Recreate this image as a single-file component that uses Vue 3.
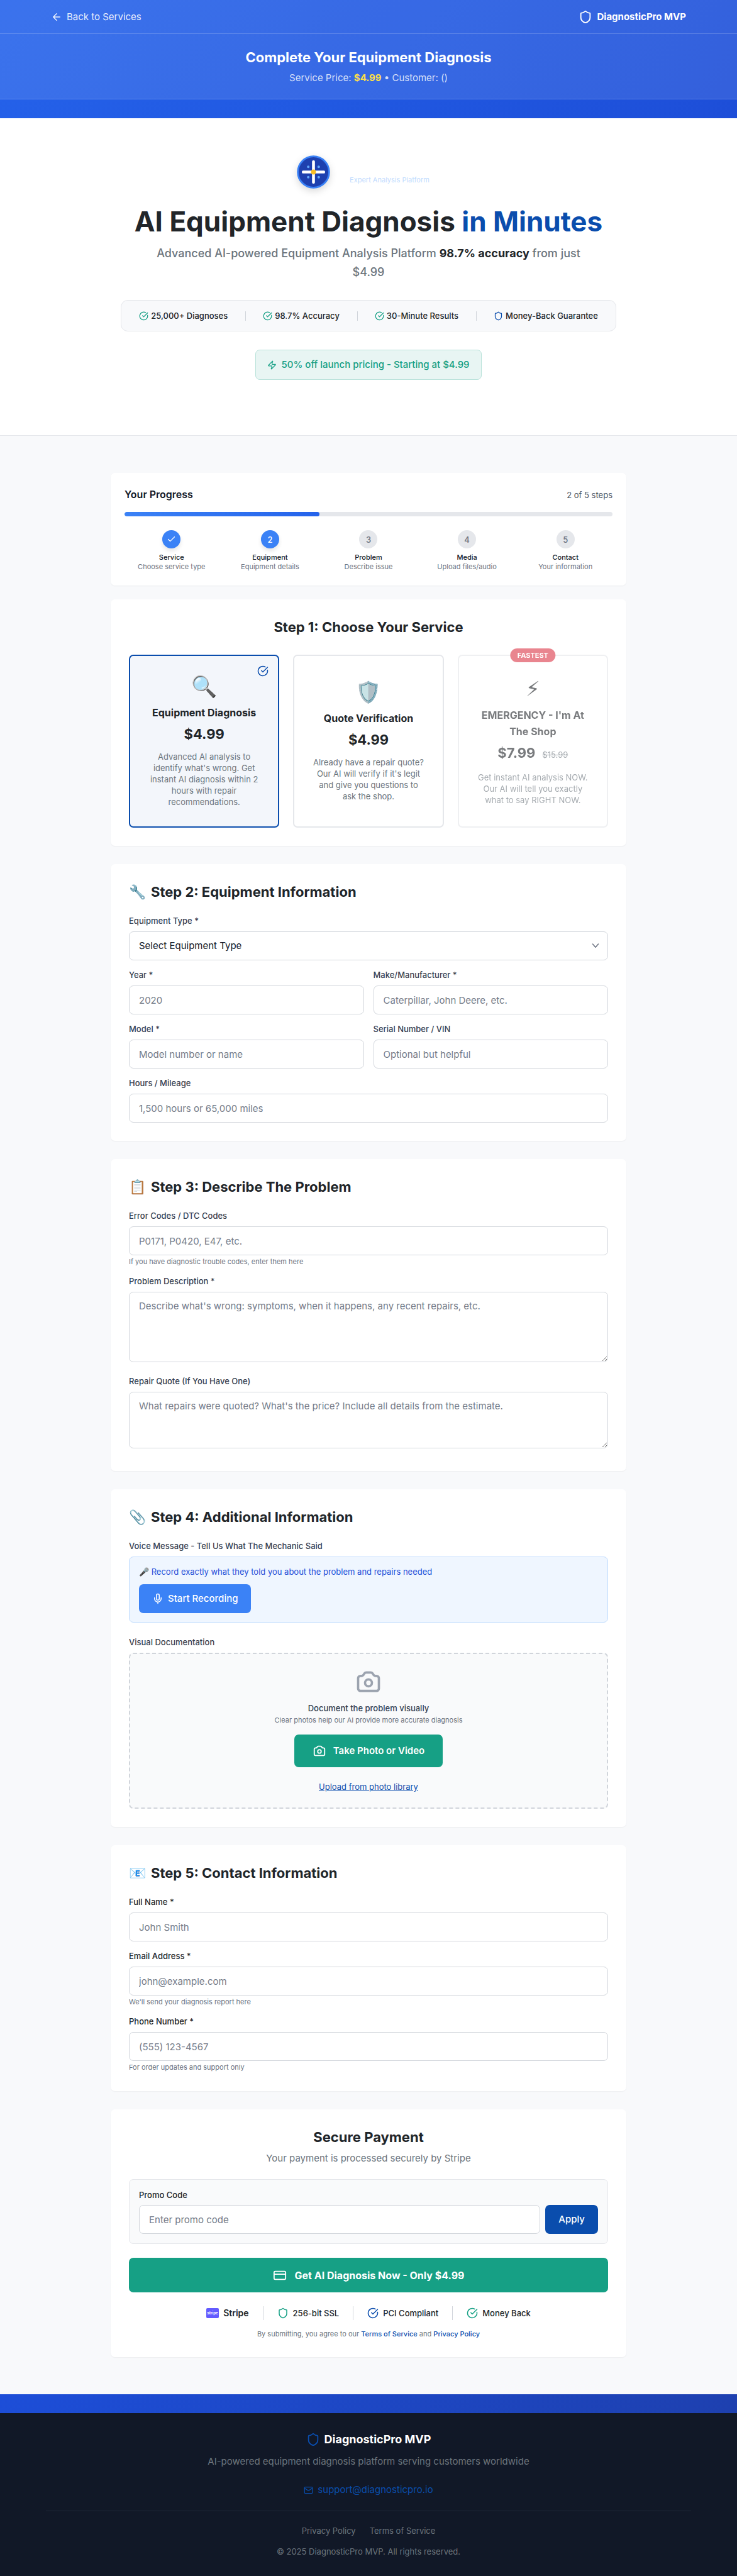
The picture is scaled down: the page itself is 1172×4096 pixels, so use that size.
<script setup>
import { ref } from 'vue'

const icons = {
  shield: ['M20 13c0 5-3.5 7.5-7.66 8.95a1 1 0 0 1-.67-.01C7.5 20.5 4 18 4 13V6a1 1 0 0 1 1-1c2 0 4.500-1.200 6.240-2.720a1.170 1.170 0 0 1 1.520 0C14.510 3.810 17 5 19 5a1 1 0 0 1 1 1z'],
  check: ['M21.801 10A10 10 0 1 1 17 3.335', 'm9 11 3 3L22 4'],
}

const trust = [
  { text: '25,000+ Diagnoses', icon: 'check' },
  { text: '98.7% Accuracy', icon: 'check' },
  { text: '30-Minute Results', icon: 'check' },
  { text: 'Money-Back Guarantee', icon: 'shield' },
]

const steps = [
  { name: 'Service', desc: 'Choose service type', done: true, active: true },
  { name: 'Equipment', desc: 'Equipment details', active: true },
  { name: 'Problem', desc: 'Describe issue' },
  { name: 'Media', desc: 'Upload files/audio' },
  { name: 'Contact', desc: 'Your information' },
]
const progress = 40

const services = [
  {
    id: 'diagnosis',
    emoji: '🔍',
    name: 'Equipment Diagnosis',
    price: '$4.99',
    desc: "Advanced AI analysis to identify what's wrong. Get instant AI diagnosis within 2 hours with repair recommendations.",
  },
  {
    id: 'quote',
    emoji: '🛡️',
    name: 'Quote Verification',
    price: '$4.99',
    desc: "Already have a repair quote? Our AI will verify if it's legit and give you questions to ask the shop.",
  },
  {
    id: 'emergency',
    emoji: '⚡\uFE0E',
    name: "EMERGENCY - I'm At The Shop",
    price: '$7.99',
    oldPrice: '$15.99',
    badge: 'FASTEST',
    dim: true,
    desc: 'Get instant AI analysis NOW. Our AI will tell you exactly what to say RIGHT NOW.',
  },
]
const selected = ref('diagnosis')

const equipment = [
  { id: 'year', label: 'Year *', hint: '2020' },
  { id: 'make', label: 'Make/Manufacturer *', hint: 'Caterpillar, John Deere, etc.' },
  { id: 'model', label: 'Model *', hint: 'Model number or name' },
  { id: 'serial', label: 'Serial Number / VIN', hint: 'Optional but helpful' },
]

const contact = [
  { id: 'name', type: 'text', label: 'Full Name *', hint: 'John Smith' },
  { id: 'email', type: 'email', label: 'Email Address *', hint: 'john@example.com', help: "We'll send your diagnosis report here" },
  { id: 'phone', type: 'tel', label: 'Phone Number *', hint: '(555) 123-4567', help: 'For order updates and support only' },
]
</script>

<template>
  <div class="page">
    <header class="top">
      <div class="bar">
        <div class="bar-inner">
          <a href="#" class="back">
            <svg class="icon i18" viewBox="0 0 24 24"><path d="m12 19-7-7 7-7M19 12H5" /></svg>
            Back to Services
          </a>
          <div class="brand">
            <svg class="icon i22" viewBox="0 0 24 24"><path :d="icons.shield[0]" /></svg>
            DiagnosticPro MVP
          </div>
        </div>
      </div>
      <div class="band">
        <h2>Complete Your Equipment Diagnosis</h2>
        <p>Service Price: <strong>$4.99</strong> • Customer: ()</p>
      </div>
    </header>

    <section class="hero">
      <div class="logo">
        <svg viewBox="0 0 64 64" class="logo-mark">
          <circle cx="32" cy="32" r="27" fill="#1e40af" stroke="#3b82f6" stroke-width="3" />
          <rect x="29.500" y="12" width="5" height="40" rx="2" fill="#fff" />
          <rect x="12" y="29.500" width="40" height="5" rx="2" fill="#fff" />
          <circle cx="32" cy="32" r="4.300" fill="#fbbf24" />
          <g fill="#60a5fa">
            <circle cx="23" cy="23" r="2.200" />
            <circle cx="41" cy="23" r="2.200" />
            <circle cx="23" cy="41" r="2.200" />
            <circle cx="41" cy="41" r="2.200" />
          </g>
        </svg>
        <span>Expert Analysis Platform</span>
      </div>
      <h1>AI Equipment Diagnosis <em>in Minutes</em></h1>
      <p class="lead">Advanced AI-powered Equipment Analysis Platform <strong>98.7% accuracy</strong> from just $4.99</p>
      <ul class="trust">
        <li v-for="t in trust" :key="t.text">
          <svg class="icon i15" :class="t.icon" viewBox="0 0 24 24"><path v-for="d in icons[t.icon]" :key="d" :d="d" /></svg>
          {{ t.text }}
        </li>
      </ul>
      <div class="promo-pill">
        <svg class="icon i15" viewBox="0 0 24 24"><path d="M4 14a1 1 0 0 1-.78-1.630l9.900-10.200a.5.5 0 0 1 .86.460l-1.920 6.020A1 1 0 0 0 13 10h7a1 1 0 0 1 .78 1.630l-9.900 10.200a.5.5 0 0 1-.86-.460l1.920-6.020A1 1 0 0 0 11 14z" /></svg>
        50% off launch pricing - Starting at $4.99
      </div>
    </section>

    <main class="main">
      <div class="column">
        <section class="card progress">
          <div class="progress-head">
            <h3>Your Progress</h3>
            <span>2 of 5 steps</span>
          </div>
          <div class="track"><div class="fill" :style="{ width: progress + '%' }"></div></div>
          <ol class="steps">
            <li v-for="(s, i) in steps" :key="s.name">
              <span class="dot" :class="{ on: s.active }">
                <svg v-if="s.done" class="icon i15" viewBox="0 0 24 24"><path d="M20 6 9 17l-5-5" /></svg>
                <template v-else>{{ i + 1 }}</template>
              </span>
              <b>{{ s.name }}</b>
              <small>{{ s.desc }}</small>
            </li>
          </ol>
        </section>

        <section class="card first">
          <h2 class="center">Step 1: Choose Your Service</h2>
          <div class="services">
            <button
              v-for="s in services"
              :key="s.id"
              type="button"
              class="service"
              :class="{ selected: s.id === selected, dim: s.dim }"
              @click="selected = s.id"
            >
              <span v-if="s.badge" class="badge">{{ s.badge }}</span>
              <svg v-if="s.id === selected" class="icon i18 tick" viewBox="0 0 24 24"><path v-for="d in icons.check" :key="d" :d="d" /></svg>
              <span class="emoji">{{ s.emoji }}</span>
              <span class="name">{{ s.name }}</span>
              <span class="price">{{ s.price }}<s v-if="s.oldPrice">{{ s.oldPrice }}</s></span>
              <span class="desc">{{ s.desc }}</span>
            </button>
          </div>
        </section>

        <section class="card">
          <h2 class="step"><span>🔧</span>Step 2: Equipment Information</h2>
          <div class="fields two">
            <div class="field wide">
              <label for="type">Equipment Type *</label>
              <div class="select">
                <select id="type"><option>Select Equipment Type</option></select>
                <svg class="icon i18" viewBox="0 0 24 24"><path d="m6 8 6 7 6-7" /></svg>
              </div>
            </div>
            <div v-for="f in equipment" :key="f.id" class="field">
              <label :for="f.id">{{ f.label }}</label>
              <input :id="f.id" type="text" :placeholder="f.hint" />
            </div>
            <div class="field wide">
              <label for="hours">Hours / Mileage</label>
              <input id="hours" type="text" placeholder="1,500 hours or 65,000 miles" />
            </div>
          </div>
        </section>

        <section class="card">
          <h2 class="step"><span>📋</span>Step 3: Describe The Problem</h2>
          <div class="fields">
            <div class="field">
              <label for="codes">Error Codes / DTC Codes</label>
              <input id="codes" type="text" placeholder="P0171, P0420, E47, etc." />
              <small>If you have diagnostic trouble codes, enter them here</small>
            </div>
            <div class="field area">
              <label for="problem">Problem Description *</label>
              <textarea id="problem" class="tall" placeholder="Describe what's wrong: symptoms, when it happens, any recent repairs, etc."></textarea>
            </div>
            <div class="field area">
              <label for="quote">Repair Quote (If You Have One)</label>
              <textarea id="quote" placeholder="What repairs were quoted? What's the price? Include all details from the estimate."></textarea>
            </div>
          </div>
        </section>

        <section class="card">
          <h2 class="step"><span>📎</span>Step 4: Additional Information</h2>
          <h4>Voice Message - Tell Us What The Mechanic Said</h4>
          <div class="voice">
            <p>🎤 Record exactly what they told you about the problem and repairs needed</p>
            <button type="button" class="record">
              <svg class="icon i18" viewBox="0 0 24 24"><path d="M12 2a3 3 0 0 0-3 3v7a3 3 0 0 0 6 0V5a3 3 0 0 0-3-3Z" /><path d="M19 10v2a7 7 0 0 1-14 0v-2M12 19v3" /></svg>
              Start Recording
            </button>
          </div>
          <h4 class="later">Visual Documentation</h4>
          <div class="drop">
            <svg class="icon i44" viewBox="0 0 24 24"><path d="M3 9a2 2 0 012-2h.93a2 2 0 001.664-.89l.812-1.220A2 2 0 0110.070 4h3.860a2 2 0 011.664.89l.812 1.220A2 2 0 0018.070 7H19a2 2 0 012 2v9a2 2 0 01-2 2H5a2 2 0 01-2-2V9z" /><circle cx="12" cy="13" r="3" /></svg>
            <p>Document the problem visually</p>
            <small>Clear photos help our AI provide more accurate diagnosis</small>
            <button type="button" class="photo">
              <svg class="icon i22" viewBox="0 0 24 24"><path d="M3 9a2 2 0 012-2h.93a2 2 0 001.664-.89l.812-1.220A2 2 0 0110.070 4h3.860a2 2 0 011.664.89l.812 1.220A2 2 0 0018.070 7H19a2 2 0 012 2v9a2 2 0 01-2 2H5a2 2 0 01-2-2V9z" /><circle cx="12" cy="13" r="3" /></svg>
              Take Photo or Video
            </button>
            <a href="#">Upload from photo library</a>
          </div>
        </section>

        <section class="card contact">
          <h2 class="step"><span>📧</span>Step 5: Contact Information</h2>
          <div class="fields">
            <div v-for="f in contact" :key="f.id" class="field">
              <label :for="f.id">{{ f.label }}</label>
              <input :id="f.id" :type="f.type" :placeholder="f.hint" />
              <small v-if="f.help">{{ f.help }}</small>
            </div>
          </div>
        </section>

        <section class="card pay">
          <h2 class="center">Secure Payment</h2>
          <p class="sub">Your payment is processed securely by Stripe</p>
          <div class="promo">
            <label for="promo">Promo Code</label>
            <div class="promo-row">
              <input id="promo" type="text" placeholder="Enter promo code" />
              <button type="button">Apply</button>
            </div>
          </div>
          <button type="button" class="cta">
            <svg class="icon i22" viewBox="0 0 24 24"><rect x="2" y="5" width="20" height="14" rx="2" /><path d="M2 10h20" /></svg>
            Get AI Diagnosis Now - Only $4.99
          </button>
          <ul class="secure">
            <li class="stripe">
              <svg class="stripe-mark" viewBox="0 0 20 16"><rect width="20" height="16" rx="2" fill="#635bff" /><text x="10" y="10" text-anchor="middle" fill="#fff" font-size="6" font-weight="700">stripe</text></svg>
              Stripe
            </li>
            <li><svg class="icon i18 green" viewBox="0 0 24 24"><path :d="icons.shield[0]" /></svg>256-bit SSL</li>
            <li><svg class="icon i18 blue" viewBox="0 0 24 24"><path v-for="d in icons.check" :key="d" :d="d" /></svg>PCI Compliant</li>
            <li><svg class="icon i18 green" viewBox="0 0 24 24"><path v-for="d in icons.check" :key="d" :d="d" /></svg>Money Back</li>
          </ul>
          <p class="terms">By submitting, you agree to our <a href="#">Terms of Service</a> and <a href="#">Privacy Policy</a></p>
        </section>
      </div>
    </main>

    <div class="strip"></div>
    <footer class="footer">
      <div class="foot-brand">
        <svg class="icon i22" viewBox="0 0 24 24"><path :d="icons.shield[0]" /></svg>
        DiagnosticPro MVP
      </div>
      <p class="tagline">AI-powered equipment diagnosis platform serving customers worldwide</p>
      <a href="#" class="mail">
        <svg class="icon i15" viewBox="0 0 24 24"><rect x="2" y="4" width="20" height="16" rx="2" /><path d="m22 7-8.970 5.700a1.940 1.940 0 0 1-2.060 0L2 7" /></svg>
        support@diagnosticpro.io
      </a>
      <div class="legal">
        <nav><a href="#">Privacy Policy</a><a href="#">Terms of Service</a></nav>
        <p>© 2025 DiagnosticPro MVP. All rights reserved.</p>
      </div>
    </footer>
  </div>
</template>

<style>
body {
  margin: 0;
}
</style>

<style scoped>
.page {
  --blue: #0a4dad;
  --green: #16a085;
  --ink: #212529;
  --muted: #6c757d;
  --line: #e5e7eb;
  font-family: Inter, "Liberation Sans", sans-serif;
  font-size: 15px;
  line-height: 22px;
  color: var(--ink);
  background: #fff;
}
.page * {
  box-sizing: border-box;
}
h1, h2, h3, h4, p, ul, ol {
  margin: 0;
  padding: 0;
}
ul, ol {
  list-style: none;
}
a {
  color: inherit;
  text-decoration: none;
}
button, input, select, textarea {
  font: inherit;
  color: inherit;
  margin: 0;
}
button {
  border: 0;
  cursor: pointer;
}
small {
  font-size: 11px;
  line-height: 15px;
}
.icon {
  flex: none;
  fill: none;
  stroke: currentColor;
  stroke-width: 2;
  stroke-linecap: round;
  stroke-linejoin: round;
}
.i15 { width: 15px; height: 15px; }
.i18 { width: 18px; height: 18px; }
.i22 { width: 22px; height: 22px; }
.i44 { width: 44px; height: 44px; }
.green { color: var(--green); }
.blue { color: var(--blue); }

/* Header */
.top {
  padding-bottom: 30px;
  color: #fff;
  background: linear-gradient(135deg, #2563eb, #1d4ed8);
}
.bar, .band {
  background: rgba(255, 255, 255, 0.1);
  border-bottom: 1px solid rgba(255, 255, 255, 0.2);
}
.bar-inner {
  display: flex;
  align-items: center;
  justify-content: space-between;
  max-width: 1040px;
  height: 53px;
  margin: 0 auto;
  padding: 0 15px;
}
.back, .brand {
  display: flex;
  align-items: center;
  gap: 7px;
}
.back {
  color: rgba(255, 255, 255, 0.9);
}
.brand {
  font-weight: 700;
}
.band {
  padding: 22px 0;
  text-align: center;
}
.band h2 {
  font-size: 22px;
  line-height: 30px;
  font-weight: 700;
}
.band p {
  margin-top: 7px;
  color: rgba(255, 255, 255, 0.8);
}
.band strong {
  color: #fde047;
}

/* Hero */
.hero {
  display: flex;
  flex-direction: column;
  align-items: center;
  padding: 56px 22px 88px;
  text-align: center;
  border-bottom: 1px solid var(--line);
}
.logo {
  display: flex;
  align-items: flex-end;
  gap: 28px;
  padding-right: 20px;
}
.logo-mark {
  width: 59px;
  height: 59px;
  filter: drop-shadow(0 4px 6px rgba(0, 0, 0, 0.15));
}
.logo span {
  padding-bottom: 9px;
  font-size: 11px;
  line-height: 15px;
  color: #bfdbfe;
}
h1 {
  margin-top: 22px;
  font-size: 44px;
  line-height: 55px;
  font-weight: 700;
}
h1 em {
  font-style: normal;
  color: var(--blue);
}
.lead {
  max-width: 703px;
  margin-top: 8px;
  font-size: 18px;
  line-height: 30px;
  font-weight: 500;
  color: var(--muted);
}
.lead strong {
  color: var(--ink);
}
.trust {
  display: flex;
  align-items: center;
  margin-top: 29px;
  padding: 15px 0;
  font-size: 13px;
  line-height: 18px;
  font-weight: 500;
  background: #f8f9fb;
  border: 1px solid var(--line);
  border-radius: 11px;
}
.trust li {
  display: flex;
  align-items: center;
  gap: 4px;
  padding: 0 28px;
}
.trust li + li {
  background: linear-gradient(#d1d5db, #d1d5db) left center / 1px 15px no-repeat;
}
.trust .check { color: var(--green); }
.trust .shield { color: var(--blue); }
.promo-pill {
  display: flex;
  align-items: center;
  gap: 7px;
  margin-top: 29px;
  padding: 12px 18px;
  font-weight: 500;
  color: var(--green);
  background: #e8f5f3;
  border: 1px solid #b9e2da;
  border-radius: 7px;
}

/* Cards */
.main {
  padding: 59px 22px;
  background: #f8f9fb;
}
.column {
  display: flex;
  flex-direction: column;
  gap: 29px;
  max-width: 820px;
  margin: 0 auto;
}
.card {
  padding: 29px;
  background: #fff;
  border-radius: 7px;
  box-shadow: 0 1px 2px rgba(0, 0, 0, 0.05);
}
.card h2 {
  margin-bottom: 22px;
  font-size: 22px;
  line-height: 30px;
  font-weight: 700;
}
.card h2.center {
  text-align: center;
}
.step {
  display: flex;
  gap: 8px;
}
.step span {
  width: 27px;
}
.progress {
  padding: 22px;
}
.progress-head {
  display: flex;
  align-items: center;
  justify-content: space-between;
  font-size: 13px;
  color: #4b5563;
}
.progress-head h3 {
  font-size: 16px;
  line-height: 25px;
  font-weight: 600;
  color: #111827;
}
.track {
  height: 7px;
  margin: 15px 0 22px;
  overflow: hidden;
  background: var(--line);
  border-radius: 4px;
}
.fill {
  height: 100%;
  background: linear-gradient(90deg, #3b82f6, #2563eb);
  border-radius: 4px;
}
.steps {
  display: grid;
  grid-template-columns: repeat(5, 1fr);
  gap: 7px;
}
.steps li {
  display: flex;
  flex-direction: column;
  align-items: center;
}
.dot {
  display: flex;
  align-items: center;
  justify-content: center;
  width: 29px;
  height: 29px;
  margin-bottom: 7px;
  font-size: 13px;
  font-weight: 500;
  color: #6b7280;
  background: var(--line);
  border-radius: 50%;
}
.dot.on {
  color: #fff;
  background: #3b82f6;
  box-shadow: 0 4px 6px rgba(0, 0, 0, 0.1);
}
.steps b {
  font-size: 11px;
  line-height: 15px;
  font-weight: 500;
  color: #111827;
}
.steps small {
  color: #6b7280;
}

/* Service choice */
.first {
  margin-top: -7px;
}
.card.first h2 {
  margin-bottom: 29px;
}
.services {
  display: grid;
  grid-template-columns: repeat(3, 1fr);
  gap: 22px;
}
.service {
  position: relative;
  display: flex;
  flex-direction: column;
  align-items: center;
  justify-content: center;
  padding: 30px 29px;
  background: #fff;
  border: 2px solid var(--line);
  border-radius: 7px;
}
.service.selected {
  background: #f3f6fb;
  border-color: var(--blue);
}
.service.dim {
  opacity: 0.6;
}
.badge {
  position: absolute;
  top: -12px;
  left: 50%;
  padding: 0 11px;
  font-size: 11px;
  line-height: 22px;
  font-weight: 700;
  color: #fff;
  background: #dc3545;
  border-radius: 11px;
  transform: translateX(-50%);
}
.tick {
  position: absolute;
  top: 15px;
  right: 15px;
  color: var(--blue);
}
.emoji {
  font-size: 33px;
  line-height: 37px;
}
.dim .emoji {
  font-family: "DejaVu Sans", sans-serif;
}
.name {
  margin-top: 10px;
  font-size: 16px;
  line-height: 26px;
  font-weight: 700;
}
.price {
  margin-top: 7px;
  font-size: 22px;
  line-height: 29px;
  font-weight: 700;
}
.price s {
  margin-left: 11px;
  font-size: 13px;
  font-weight: 400;
  color: var(--muted);
}
.desc {
  margin-top: 12px;
  font-size: 13px;
  line-height: 18px;
  color: var(--muted);
}

/* Forms */
.fields {
  display: grid;
  gap: 14px 15px;
}
.fields.two {
  grid-template-columns: 1fr 1fr;
}
.wide {
  grid-column: 1 / -1;
}
.field {
  display: flex;
  flex-direction: column;
}
.area {
  padding-bottom: 7px;
}
label, h4 {
  display: block;
  margin-bottom: 8px;
  font-size: 13px;
  line-height: 18px;
  font-weight: 500;
  color: #374151;
}
.contact label, .promo label {
  color: var(--ink);
}
input, select, textarea {
  width: 100%;
  height: 46px;
  padding: 0 15px;
  color: #111827;
  background: #fff;
  border: 1px solid #d1d5db;
  border-radius: 7px;
}
select {
  appearance: none;
}
textarea {
  height: 90px;
  padding: 11px 15px;
  resize: vertical;
}
textarea.tall {
  height: 112px;
}
input::placeholder, textarea::placeholder {
  color: #757c89;
  opacity: 1;
}
.select {
  position: relative;
}
.select .icon {
  position: absolute;
  top: 14px;
  right: 11px;
  color: #6b7280;
}
.field small {
  margin-top: 3px;
  color: #6b7280;
}
.contact {
  padding-bottom: 30px;
}

/* Media */
.voice {
  padding: 14px 15px;
  background: #eff6ff;
  border: 1px solid #bfdbfe;
  border-radius: 7px;
}
.voice p {
  margin-bottom: 11px;
  font-size: 13px;
  line-height: 18px;
  color: #1d4ed8;
}
.record {
  display: flex;
  align-items: center;
  gap: 7px;
  height: 46px;
  padding: 0 21px;
  font-weight: 500;
  color: #fff;
  background: #3b82f6;
  border-radius: 7px;
}
.later {
  margin-top: 22px;
}
.drop {
  display: flex;
  flex-direction: column;
  align-items: center;
  padding: 22px 22px 24px;
  background: #f9fafb;
  border: 2px dashed #d1d5db;
  border-radius: 7px;
}
.drop .i44 {
  color: #9ca3af;
}
.drop p {
  margin-top: 11px;
  font-size: 13px;
  line-height: 18px;
  font-weight: 500;
  color: #374151;
}
.drop small {
  margin-top: 3px;
  color: #6b7280;
}
.photo {
  display: flex;
  align-items: center;
  gap: 11px;
  height: 52px;
  margin: 15px 0 22px;
  padding: 0 29px;
  font-weight: 600;
  color: #fff;
  background: var(--green);
  border-radius: 7px;
}
.drop a {
  font-size: 13px;
  line-height: 18px;
  color: var(--blue);
  text-decoration: underline;
}

/* Payment */
.card.pay h2 {
  margin-bottom: 8px;
}
.sub {
  text-align: center;
  color: var(--muted);
}
.promo {
  margin: 22px 0;
  padding: 15px;
  background: #f9fafb;
  border: 1px solid var(--line);
  border-radius: 7px;
}
.promo label {
  margin-bottom: 7px;
}
.promo-row {
  display: flex;
  gap: 8px;
}
.promo-row button {
  padding: 0 21px;
  font-weight: 500;
  color: #fff;
  background: var(--blue);
  border-radius: 7px;
}
.cta {
  display: flex;
  align-items: center;
  justify-content: center;
  gap: 13px;
  width: 100%;
  height: 55px;
  font-size: 16px;
  font-weight: 700;
  color: #fff;
  background: var(--green);
  border-radius: 7px;
}
.secure {
  display: flex;
  justify-content: center;
  margin: 22px 0 15px;
  font-size: 13px;
  line-height: 22px;
  font-weight: 500;
}
.secure li {
  display: flex;
  align-items: center;
  gap: 7px;
  padding: 0 22px;
}
.secure li + li {
  border-left: 1px solid #d1d5db;
}
.secure .stripe {
  font-size: 14px;
  font-weight: 600;
}
.stripe-mark {
  width: 20px;
  height: 16px;
}
.terms {
  font-size: 11px;
  line-height: 15px;
  text-align: center;
  color: var(--muted);
}
.terms a {
  font-weight: 500;
  color: var(--blue);
}

/* Footer */
.strip {
  height: 30px;
  background: linear-gradient(135deg, #1d4ed8, #1e40af);
}
.footer {
  display: flex;
  flex-direction: column;
  align-items: center;
  padding: 29px 73px 30px;
  color: var(--muted);
  background: #111827;
}
.foot-brand {
  display: flex;
  align-items: center;
  gap: 7px;
  font-size: 18px;
  line-height: 26px;
  font-weight: 700;
  color: #fff;
}
.foot-brand .icon {
  color: var(--blue);
}
.tagline {
  margin: 11px 0 23px;
}
.mail {
  display: flex;
  align-items: center;
  gap: 7px;
  color: var(--blue);
}
.legal {
  width: 100%;
  margin-top: 22px;
  padding-top: 22px;
  font-size: 13px;
  line-height: 18px;
  text-align: center;
  border-top: 1px solid #1f2937;
}
.legal nav {
  display: flex;
  justify-content: center;
  gap: 22px;
  margin-bottom: 15px;
}
</style>
